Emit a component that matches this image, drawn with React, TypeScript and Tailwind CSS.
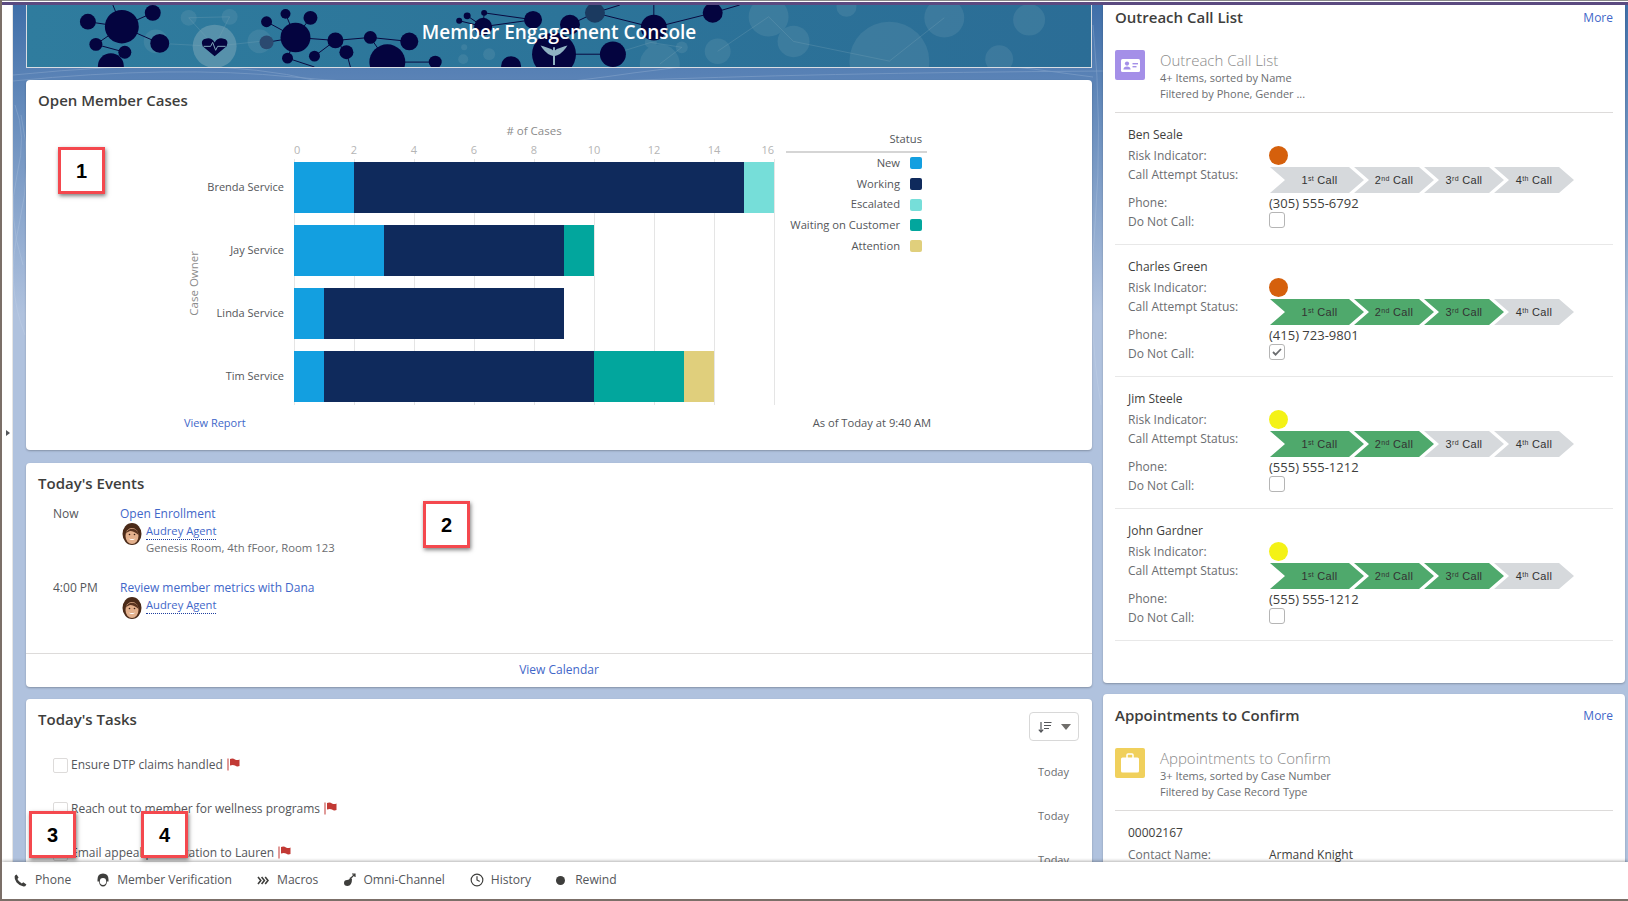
import { Clock } from "lucide-react";

// page data
const callers = [
  { name: "Ben Seale", risk: "bg-[#d5600c]", done: 0, phone: "(305) 555-6792", dnc: false },
  { name: "Charles Green", risk: "bg-[#d5600c]", done: 3, phone: "(415) 723-9801", dnc: true },
  { name: "Jim Steele", risk: "bg-[#f4f216]", done: 2, phone: "(555) 555-1212", dnc: false },
  { name: "John Gardner", risk: "bg-[#f4f216]", done: 3, phone: "(555) 555-1212", dnc: false },
];

const caseRows = [
  { owner: "Brenda Service", new: 2, working: 13, waiting: 0, escalated: 1, attention: 0 },
  { owner: "Jay Service", new: 3, working: 6, waiting: 1, escalated: 0, attention: 0 },
  { owner: "Linda Service", new: 1, working: 8, waiting: 0, escalated: 0, attention: 0 },
  { owner: "Tim Service", new: 1, working: 9, waiting: 3, escalated: 0, attention: 1 },
];

const legend = [
  { label: "New", color: "bg-[#139fe0]" },
  { label: "Working", color: "bg-[#0f2a5c]" },
  { label: "Escalated", color: "bg-[#76ded9]" },
  { label: "Waiting on Customer", color: "bg-[#02a69d]" },
  { label: "Attention", color: "bg-[#e0cf7c]" },
];

const tasks = [
  "Ensure DTP claims handled",
  "Reach out to member for wellness programs",
  "Email appeal presentation to Lauren",
];

const UNIT = 30;

const Avatar = () => (
  <svg width="20" height="23" viewBox="0 0 20 23" className="shrink-0">
    <ellipse cx="10" cy="11" rx="9.5" ry="11" fill="#4a2a18" />
    <ellipse cx="10" cy="13" rx="6.5" ry="8" fill="#e3b08c" />
    <path d="M3.5 11 Q6 5 12 6 Q16 7 16.5 12 Q12 8 8 8 Q5 9 3.5 11Z" fill="#5a3420" />
    <path d="M6.5 15.5 Q10 18.5 13.5 15.5 Q10 16.5 6.5 15.5Z" fill="#fff" />
    <circle cx="7.5" cy="11.5" r="0.8" fill="#3a2015" />
    <circle cx="12.5" cy="11.5" r="0.8" fill="#3a2015" />
  </svg>
);

const Flag = () => (
  <svg width="13" height="13" viewBox="0 0 13 13" className="shrink-0">
    <rect x="0.5" y="0.5" width="1" height="12" fill="#c23934" />
    <path d="M3 1 Q6 0 8 1.5 Q10 2.5 12.5 1.5 V8 Q10 9 8 7.5 Q6 6.5 3 7.5Z" fill="#c23934" />
  </svg>
);

const PersonCardIcon = () => (
  <div className="w-[30px] h-[30px] rounded-[2px] bg-[#a48fe8] flex items-center justify-center">
    <svg width="19" height="13" viewBox="0 0 19 13">
      <rect width="19" height="13" rx="1.5" fill="#fff" />
      <circle cx="6" cy="4.6" r="2.1" fill="#a48fe8" />
      <path d="M2.4 10.5 Q2.6 7.6 6 7.6 Q9.4 7.6 9.6 10.5Z" fill="#a48fe8" />
      <rect x="11.5" y="4" width="5.5" height="1.4" fill="#a48fe8" />
      <rect x="11.5" y="7" width="4" height="1.4" fill="#a48fe8" />
    </svg>
  </div>
);

const CaseIcon = () => (
  <div className="w-[30px] h-[30px] rounded-[2px] bg-[#f0d05c] flex items-center justify-center">
    <svg width="18" height="20" viewBox="0 0 18 20">
      <path d="M6 5 V2 Q6 1 7 1 H11 Q12 1 12 2 V5" fill="none" stroke="#fff" strokeWidth="1.5" />
      <rect y="4.5" width="18" height="15" rx="1.5" fill="#fff" />
    </svg>
  </div>
);

const chevron =
  "[clip-path:polygon(0_0,calc(100%-15px)_0,100%_50%,calc(100%-15px)_100%,0_100%,15px_50%)]";

const CallStep = ({ n, suffix, on, first }: { n: number; suffix: string; on: boolean; first: boolean }) => (
  <div
    className={`${chevron} ${on ? "bg-[#4fa96c]" : "bg-[#d6d9dc]"} ${
      first ? "w-[94px] pl-[5px]" : "w-[80px] ml-[-10px]"
    } h-[26px] flex items-center justify-center [font-family:'Liberation_Sans',sans-serif] text-[11px] tracking-[0.3px] text-[#333333]`}
  >
    <span>
      {n}
      <sup className="text-[7px]">{suffix}</sup> Call
    </span>
  </div>
);

const ListHeader = ({ icon, title, lines, top }: { icon: React.ReactNode; title: string; lines: string[]; top: string }) => (
  <div className={`flex gap-[15px] mx-3 ${top} h-[63px] border-b border-[#dddbda]`}>
    {icon}
    <div>
      <div className="text-[15px] leading-[20px] text-[#8a8a8a] font-light">{title}</div>
      {lines.map((l) => (
        <div key={l} className="text-[11px] leading-[16px] text-[#6b6d70]">
          {l}
        </div>
      ))}
    </div>
  </div>
);

const Banner = () => (
  <div className="relative h-[63px] shrink-0 border border-t-0 border-[#d9dde3] bg-gradient-to-r from-[#2f7c9e] via-[#2c7499] to-[#2b6d96] flex items-center justify-center overflow-hidden">
    <svg className="absolute inset-0 w-full h-full" viewBox="26 5 1066 63" preserveAspectRatio="none">
      <g fill="#7fa9ba" opacity="0.2">
        {[
          [188, 18, 8], [229, 17, 8], [155, 42, 12], [259, 42, 12], [463, 60, 5], [489, 55, 6], [464, 48, 3],
          [651, 43, 6], [682, 48, 6], [660, 65, 20], [718, 52, 13], [794, 42, 16], [769, 17, 20], [945, 18, 20],
          [890, 62, 40], [847, 7, 10], [1030, 20, 16], [1000, 60, 14],
        ].map(([x, y, r]) => (
          <circle key={`${x}-${y}`} cx={x} cy={y} r={r} />
        ))}
      </g>
      <g stroke="#7fa9ba" strokeWidth="0.7" opacity="0.4" fill="none">
        <path d="M159 44 L214 47 L188 18 L229 17 L214 47 L259 42" />
        <path d="M651 43 L682 48 L660 65 M613 55 L651 43 M718 52 L769 17 L794 42 L890 62 L945 18" />
      </g>
      <g stroke="#08083f" strokeWidth="1" fill="none">
        <path d="M110 0 L121 27 L87 22 M121 27 L152 13 M121 27 L159 44 M121 27 L95 45 L124 53 L110 67" />
        <path d="M266 22 L295 38 L285 14 M295 38 L310 18 M295 38 L266 43 M295 38 L335 41 L370 38 L409 42 M387 63 L370 38 M335 41 L346 53 M335 41 L314 57 M295 38 L287 59 L314 68 M387 63 L435 63 M346 53 L350 68" />
        <path d="M459 21 L483 27 L467 16 M483 27 L484 13 L533 20 L483 27 M554 55 L613 55 M595 13 L570 25 M595 13 L654 28 L713 13 M654 28 L654 5 M713 13 L740 5 M595 13 L620 5" />
      </g>
      <g fill="#04043f">
        {[
          [121, 27, 17], [87, 22, 8], [152, 13, 8], [159, 44, 9.5], [95, 45, 6.5], [124, 53, 6.5], [110, 67, 13],
          [295, 38, 15], [266, 22, 5.5], [285, 14, 5], [310, 18, 7], [335, 41, 8], [370, 38, 6.5], [409, 42, 9],
          [346, 53, 7], [314, 57, 5.5], [287, 59, 5.5], [387, 63, 18], [435, 63, 6.5], [483, 27, 9], [467, 16, 3.5],
          [484, 13, 3], [533, 20, 9], [459, 21, 3], [511, 67, 10], [570, 25, 10], [654, 28, 13], [713, 13, 10],
          [613, 55, 13], [554, 55, 22],
        ].map(([x, y, r]) => (
          <circle key={`${x}-${y}`} cx={x} cy={y} r={r} />
        ))}
        <circle cx="595" cy="13" r="10" fill="#1b3a60" />
        <circle cx="266" cy="43" r="7" fill="#2b4a70" />
      </g>
      <circle cx="214" cy="47" r="22" fill="#7fa9ba" opacity="0.5" />
      <path d="M214 57 L202 47 Q199 40 206 39 Q211 38 214 43 Q217 38 222 39 Q229 40 226 47Z" fill="#04043f" />
      <path d="M203 47 H210 L212 43 L215 51 L217 47 H225" stroke="#7fa9ba" strokeWidth="1" fill="none" />
      <path d="M554 48 V66 M543 48 Q550 50 554 53 Q558 50 565 48 Q560 55 554 56 Q548 55 543 48Z" stroke="#8fb2c2" strokeWidth="2" fill="#8fb2c2" />
    </svg>
    <h1 className="relative text-[19px] font-semibold text-white mb-[8px]">Member Engagement Console</h1>
  </div>
);

const CasesCard = () => (
  <section className="bg-white rounded-[4px] shadow-[0_1px_2px_rgba(0,0,0,0.25)] h-[370px] shrink-0 mt-3 flex flex-col px-3">
    <h2 className="text-[15px] font-semibold leading-[18px] mt-[11px] text-[#3e3e3c]">Open Member Cases</h2>
    <div className="flex mt-[14px]">
      {/* y axis title */}
      <div className="w-[256px] shrink-0 flex items-center pl-[147px]">
        <span className="[writing-mode:vertical-rl] rotate-180 text-[11.5px] text-[#8b8b8b] mt-[38px]">Case Owner</span>
      </div>
      <div className="relative w-[480px] shrink-0">
        <div className="h-[16px] text-center text-[11.5px] leading-[16px] text-[#8b8b8b]"># of Cases</div>
        <div className="relative h-[20px] mt-[3px] text-[11px] leading-[16px] text-[#b5b5b5]">
          {[0, 2, 4, 6, 8, 10, 12, 14].map((t) => (
            <span key={t} className={t === 0 ? "absolute left-0" : "absolute -translate-x-1/2"} style={{ left: t * UNIT }}>
              {t}
            </span>
          ))}
          <span className="absolute right-0">16</span>
        </div>
        <div className="relative h-[243px]">
          {[0, 2, 4, 6, 8, 10, 12, 14, 16].map((t) => (
            <div key={t} className="absolute top-[-3px] bottom-0 w-px bg-[#e5e5e5]" style={{ left: t * UNIT }} />
          ))}
          <div className="relative flex flex-col gap-[12px]">
            {caseRows.map((r) => (
              <div key={r.owner} className="relative flex h-[51px]">
                <span className="absolute right-full mr-[10px] top-[16px] text-[11px] leading-[18px] whitespace-nowrap text-[#54565a]">
                  {r.owner}
                </span>
                <div className="bg-[#139fe0]" style={{ width: r.new * UNIT }} />
                <div className="bg-[#0f2a5c]" style={{ width: r.working * UNIT }} />
                <div className="bg-[#02a69d]" style={{ width: r.waiting * UNIT }} />
                <div className="bg-[#76ded9]" style={{ width: r.escalated * UNIT }} />
                <div className="bg-[#e0cf7c]" style={{ width: r.attention * UNIT }} />
              </div>
            ))}
          </div>
        </div>
      </div>
      <div className="w-[141px] ml-[12px] shrink-0 text-[11.2px] text-[#54565a]">
        <div className="h-[30px] pr-[5px] pt-[8px] text-right leading-[16px] border-b-2 border-[#d5d5d5]">Status</div>
        {legend.map((l) => (
          <div key={l.label} className="h-[20.7px] flex items-center justify-end gap-[10px] pr-[5px] first:mt-[1px]">
            <span className="whitespace-nowrap">{l.label}</span>
            <span className={`w-3 h-3 rounded-[2px] ${l.color}`} />
          </div>
        ))}
      </div>
    </div>
    <div className="flex mt-[10px] text-[11px] leading-[16px] ml-[146px]">
      <a className="text-[#3f67c9]">View Report</a>
      <span className="ml-[567px] text-[11.2px] text-[#54565a] whitespace-nowrap">As of Today at 9:40 AM</span>
    </div>
  </section>
);

const EventsCard = () => (
  <section className="bg-white rounded-[4px] shadow-[0_1px_2px_rgba(0,0,0,0.25)] h-[224px] shrink-0 mt-[13px] flex flex-col">
    <h2 className="text-[15px] font-semibold leading-[18px] mt-[11px] mx-3 text-[#3e3e3c]">Today's Events</h2>
    <div className="flex-1 mt-[13px] text-[12px] leading-[18px]">
      <div className="flex h-[74px]">
        <div className="w-[67px] ml-[27px] text-[#54565a]">Now</div>
        <div>
          <a className="text-[#3f67c9] block">Open Enrollment</a>
          <div className="flex gap-[4px] ml-[2px]">
            <Avatar />
            <div>
              <a className="text-[#3f67c9] border-b border-dotted border-[#1f3f9f] block w-fit leading-[16px] text-[11.2px]">Audrey Agent</a>
              <div className="text-[#6b6d70] text-[11.3px] leading-[16px]">Genesis Room, 4th fFoor, Room 123</div>
            </div>
          </div>
        </div>
      </div>
      <div className="flex">
        <div className="w-[67px] ml-[27px] text-[#54565a]">4:00 PM</div>
        <div>
          <a className="text-[#3f67c9] block">Review member metrics with Dana</a>
          <div className="flex gap-[4px] ml-[2px]">
            <Avatar />
            <a className="text-[#3f67c9] border-b border-dotted border-[#1f3f9f] h-[17px] leading-[16px] text-[11.2px]">Audrey Agent</a>
          </div>
        </div>
      </div>
    </div>
    <div className="h-[34px] pb-[2px] border-t border-[#dddbda] flex items-center justify-center text-[12px] text-[#3f67c9]">View Calendar</div>
  </section>
);

const TasksCard = () => (
  <section className="bg-white rounded-t-[4px] shadow-[0_1px_2px_rgba(0,0,0,0.25)] shrink-0 mt-3 h-[400px]">
    <div className="flex justify-between pt-[13px] pl-3 pr-[13px]">
      <h2 className="text-[15px] font-semibold leading-[18px] mt-[-2px] text-[#3e3e3c]">Today's Tasks</h2>
      <button className="w-[50px] h-[29px] border border-[#d8d8d8] rounded-[4px] flex items-center justify-center gap-[9px]">
        <svg width="14" height="12" viewBox="0 0 14 12" stroke="#54565a" strokeWidth="1.2" fill="none">
          <path d="M3 1 V11 M0.8 8.6 L3 11 L5.2 8.6 M6 1.5 H13.5 M6 4.5 H13 M6 7.5 H11" />
        </svg>
        <svg width="10" height="6" viewBox="0 0 10 6">
          <path d="M0 0 H10 L5 6Z" fill="#706e6b" />
        </svg>
      </button>
    </div>
    <div className="mt-[15px] pl-[27px] pr-[23px] text-[12px] leading-[18px] text-[#54565a]">
      {tasks.map((t) => (
        <div key={t} className="flex h-[44px]">
          <span className="w-[15px] h-[15px] mt-[2px] mr-[3px] border border-[#dddbda] rounded-[2px] shrink-0" />
          <span className="whitespace-nowrap">{t}</span>
          <span className="ml-[4px] mt-[2px]">
            <Flag />
          </span>
          <span className="ml-auto mt-[7px] text-[11px] text-[#6b6d70]">Today</span>
        </div>
      ))}
    </div>
  </section>
);

const OutreachCard = () => (
  <section className="bg-white rounded-b-[4px] shadow-[0_1px_2px_rgba(0,0,0,0.25)] h-[678px] shrink-0">
    <div className="h-[25px] mb-[2px] px-3 flex items-center justify-between">
      <h2 className="text-[15px] font-semibold text-[#3e3e3c]">Outreach Call List</h2>
      <a className="text-[12px] text-[#3f67c9]">More</a>
    </div>
    <ListHeader
      icon={<PersonCardIcon />}
      title="Outreach Call List"
      lines={["4+ Items, sorted by Name", "Filtered by Phone, Gender ..."]}
      top="mt-[20px]"
    />
    <div className="mx-3">
      {callers.map((c) => (
        <div key={c.name} className="h-[132px] px-[13px] pt-[13px] border-b border-[#e8e8e8] text-[12px] leading-[18px]">
          <div className="text-[#3e3e3c]">{c.name}</div>
          <div className="grid grid-cols-[141px_1fr] text-[#6b6d70]">
            <div className="h-[19px] mt-[2px] flex items-center">Risk Indicator:</div>
            <div className="h-[19px] mt-[2px] flex items-center">
              <span className={`w-[19px] h-[19px] rounded-full ${c.risk}`} />
            </div>
            <div className="mt-[2px] h-[26px] leading-[16px]">Call Attempt Status:</div>
            <div className="mt-[2px] h-[26px] flex ml-[1px]">
              {[
                [1, "st"],
                [2, "nd"],
                [3, "rd"],
                [4, "th"],
              ].map(([n, s], i) => (
                <CallStep key={s} n={n as number} suffix={s as string} on={i < c.done} first={i === 0} />
              ))}
            </div>
            <div className="mt-[1px]">Phone:</div>
            <div className="mt-[1px] text-[13px] text-[#3e3e3c] whitespace-nowrap">{c.phone}</div>
            <div className="mt-[1px]">Do Not Call:</div>
            <div>
              <span className="w-4 h-4 border border-[#b5b5b5] rounded-[3px] flex items-center justify-center">
                {c.dnc && (
                  <svg width="10" height="8" viewBox="0 0 10 8" fill="none" stroke="#6b6d70" strokeWidth="1.8">
                    <path d="M1 4 L3.6 6.6 L9 1" />
                  </svg>
                )}
              </span>
            </div>
          </div>
        </div>
      ))}
    </div>
  </section>
);

const AppointmentsCard = () => (
  <section className="bg-white rounded-t-[4px] shadow-[0_1px_2px_rgba(0,0,0,0.25)] h-[300px] shrink-0 mt-[11px]">
    <div className="h-[43px] mb-[1px] px-3 flex items-center justify-between">
      <h2 className="text-[15px] font-semibold text-[#3e3e3c]">Appointments to Confirm</h2>
      <a className="text-[12px] text-[#3f67c9]">More</a>
    </div>
    <ListHeader
      icon={<CaseIcon />}
      title="Appointments to Confirm"
      lines={["3+ Items, sorted by Case Number", "Filtered by Case Record Type"]}
      top="mt-[11px]"
    />
    <div className="mx-3 px-[13px] pt-[13px] text-[12px] leading-[18px]">
      <div className="text-[#3e3e3c]">00002167</div>
      <div className="grid grid-cols-[141px_1fr] mt-1">
        <div className="text-[#6b6d70]">Contact Name:</div>
        <div className="text-[#3e3e3c]">Armand Knight</div>
      </div>
    </div>
  </section>
);

const Callout = ({ n, className }: { n: number; className: string }) => (
  <div
    className={`absolute w-[47px] h-[47px] bg-white border-[3px] border-[#f4484e] shadow-[1px_2px_4px_rgba(0,0,0,0.5)] flex items-center justify-center [font-family:'Liberation_Sans',sans-serif] font-bold text-[20px] text-black ${className}`}
  >
    {n}
  </div>
);

const UtilityBar = () => (
  <footer className="h-[39px] shrink-0 bg-white border-b-2 border-[#7b6f68] shadow-[0_-1px_3px_rgba(0,0,0,0.3)] relative flex items-center gap-[25px] pl-[12px] text-[12.1px] text-[#54565a]">
    <div className="flex items-center gap-[8px]">
      <svg width="13" height="13" viewBox="0 0 13 13">
        <path d="M2.6 0.5 L4.6 3.6 L3.4 5 Q4.4 7.6 7.8 9.4 L9.3 8.2 L12.4 10.4 Q11.4 12.6 9.6 12.6 Q5.5 12 2.6 8.6 Q0.2 5.2 0.6 2.4 Q1 1 2.6 0.5Z" fill="#3e3e3c" />
      </svg>
      <span>Phone</span>
    </div>
    <div className="flex items-center gap-[7px]">
      <svg width="14" height="14" viewBox="0 0 14 14">
        <path d="M7 0.5 Q12.5 0.5 12.5 6.5 V8.5 H11 Q10.5 13.5 7 13.5 Q3.5 13.5 3 8.5 H1.5 V6.5 Q1.5 0.5 7 0.5Z" fill="#3e3e3c" />
        <ellipse cx="7" cy="8.5" rx="3.2" ry="3.4" fill="#fff" />
      </svg>
      <span>Member Verification</span>
    </div>
    <div className="flex items-center gap-[8px]">
      <svg width="12" height="9" viewBox="0 0 12 9" fill="none" stroke="#3e3e3c" strokeWidth="1.6">
        <path d="M1 1 L3.8 4.5 L1 8 M4.6 1 L7.4 4.5 L4.6 8 M8.2 1 L11 4.5 L8.2 8" />
      </svg>
      <span>Macros</span>
    </div>
    <div className="flex items-center gap-[6px]">
      <svg width="14" height="14" viewBox="0 0 14 14">
        <path d="M1 10 Q1 7 4 7 Q7 7 7 4 L9 6 Q9 13 4.5 13 Q1 13 1 10Z" fill="#3e3e3c" />
        <path d="M8 5 L11.5 1.5 M9 1 H12 V4" stroke="#3e3e3c" strokeWidth="1.2" fill="none" />
      </svg>
      <span>Omni-Channel</span>
    </div>
    <div className="flex items-center gap-[7px]">
      <Clock size={14} color="#3e3e3c" strokeWidth={2} />
      <span>History</span>
    </div>
    <div className="flex items-center gap-[10px]">
      <span className="w-[9px] h-[9px] rounded-full bg-[#3e3e3c]" />
      <span>Rewind</span>
    </div>
  </footer>
);

export default function App() {
  return (
    <div className="relative h-[901px] w-[1628px] overflow-hidden flex flex-col bg-white [font-family:'Open_Sans',sans-serif] border-l-2 border-[#7b6f68]">
      <div className="h-[5px] shrink-0 border-t border-[#8a8a8a] bg-white">
        <div className="mt-[1px] h-[3px] bg-[#5b4a80]" />
      </div>
      <div className="flex-1 min-h-0 flex overflow-hidden">
        <div className="w-[11px] shrink-0 bg-white border-r border-[#e5e5e5] flex items-center">
          <span className="w-0 h-0 ml-[4px] mt-[-2px] border-y-[3px] border-y-transparent border-l-[4px] border-l-[#54565a]" />
        </div>
        <main className="relative flex-1 flex gap-[11px] pl-[13px] pr-[3px] bg-gradient-to-b from-[#3f6fa9] via-[#b0c2de] via-[36%] to-[#b0c2de] overflow-hidden">
          <svg className="absolute inset-0 w-full h-[400px] opacity-25" viewBox="0 0 1615 400" fill="none" stroke="#d7e3f2" strokeWidth="0.8">
            <path d="M0 70 Q200 50 300 75 T620 68 T1080 72" />
            <path d="M0 76 Q160 60 280 72 T600 76 T1090 66" />
            <path d="M2 100 Q14 130 4 170 T10 260 M8 110 Q20 160 6 220 T12 330" />
            <path d="M1080 20 Q1090 120 1082 220 T1088 400 M1610 40 Q1600 200 1612 360" />
          </svg>
          <div className="relative w-[1066px] shrink-0 flex flex-col">
            <Banner />
            <CasesCard />
            <EventsCard />
            <TasksCard />
          </div>
          <div className="relative w-[522px] shrink-0 flex flex-col">
            <OutreachCard />
            <AppointmentsCard />
          </div>
        </main>
      </div>
      <UtilityBar />
      <Callout n={1} className="left-[56px] top-[147px]" />
      <Callout n={2} className="left-[421px] top-[501px]" />
      <Callout n={3} className="left-[27px] top-[811px]" />
      <Callout n={4} className="left-[139px] top-[811px]" />
    </div>
  );
}
